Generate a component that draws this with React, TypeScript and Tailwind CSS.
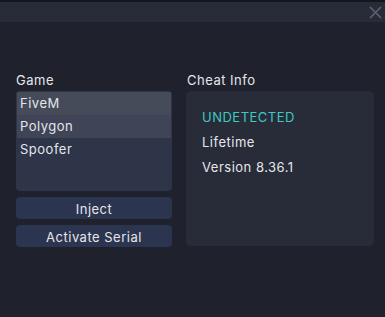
export default function App() {
  const games = [
    { name: 'FiveM', bg: 'bg-[#464b59]' },
    { name: 'Polygon', bg: 'bg-[#3f4556]' },
    { name: 'Spoofer', bg: '' },
  ]

  return (
    <div
      className="flex h-[317px] w-[385px] flex-col bg-[#1f222d] text-[13px] tracking-[0.5px] text-[#e4e6eb]"
      style={{ fontFamily: 'Inter, "Noto Sans", sans-serif' }}
    >
      <div className="h-[2px] bg-[#14161d]" />
      <div className="flex h-[20px] items-center justify-end bg-[#282c39] pr-[3px]">
        <svg width="13" height="13" viewBox="0 0 13 13" className="text-[#5c6273]">
          <path d="M1 1L12 12M12 1L1 12" stroke="currentColor" strokeWidth="1.6" />
        </svg>
      </div>

      <div className="mt-[50px] flex gap-[14px] pl-[16px]">
        <div className="flex w-[156px] shrink-0 flex-col">
          <div className="mb-[3px] leading-[16px]">Game</div>
          <div className="h-[100px] overflow-hidden rounded-[4px] bg-[#2e3549] p-[1px]">
            {games.map((g) => (
              <div key={g.name} className={`h-[23px] px-[3px] leading-[23px] ${g.bg}`}>
                {g.name}
              </div>
            ))}
          </div>
          <button className="mt-[6px] h-[22px] rounded-[4px] bg-[#2c3550] leading-[24px]">
            Inject
          </button>
          <button className="mt-[6px] h-[22px] rounded-[4px] bg-[#2c3550] leading-[24px]">
            Activate Serial
          </button>
        </div>

        <div className="flex w-[188px] shrink-0 flex-col">
          <div className="mb-[3px] pl-[1px] leading-[16px]">Cheat Info</div>
          <div className="flex h-[155px] flex-col gap-[8px] rounded-[5px] bg-[#282c39] px-[16px] pt-[18px]">
            <div className="leading-[17px] text-[#3cc9c0]">UNDETECTED</div>
            <div className="leading-[17px]">Lifetime</div>
            <div className="leading-[17px]">Version 8.36.1</div>
          </div>
        </div>
      </div>
    </div>
  )
}
